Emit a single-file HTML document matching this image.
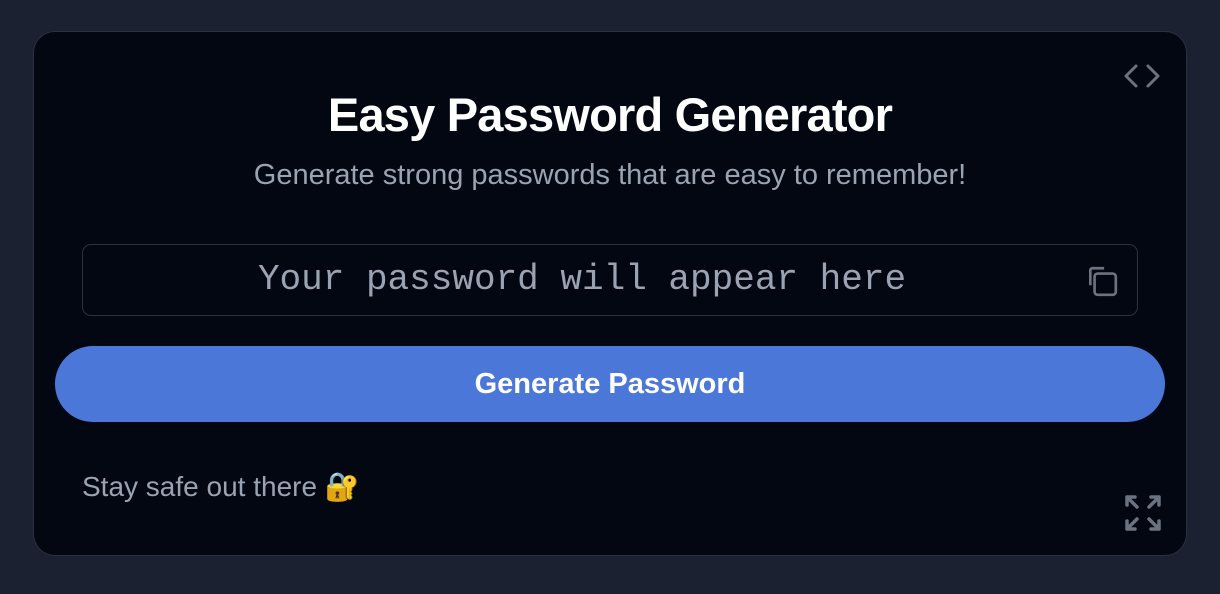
<!DOCTYPE html>
<html><head><meta charset="utf-8"><style>
*{margin:0;padding:0;box-sizing:border-box}
body{width:1220px;height:594px;background:#1b2130;font-family:"Liberation Sans",sans-serif;position:relative;overflow:hidden}
.card{position:absolute;left:33px;top:31px;width:1154px;height:525px;background:#030712;border:1px solid #2a3140;border-radius:22px}
h1{position:absolute;top:55px;left:0;right:0;text-align:center;color:#fff;font-size:47px;font-weight:bold;letter-spacing:-0.8px}
.sub{position:absolute;top:127px;left:0;right:0;text-align:center;color:#9aa3b2;font-size:29px}
.inp{position:absolute;left:48px;top:212px;width:1056px;height:72px;border:1.5px solid #2b3240;border-radius:9px;color:#9aa3b2;font-family:"Liberation Mono",monospace;font-size:36px;text-align:center;line-height:70px;padding-right:56px}
.btn{position:absolute;left:21px;top:314px;width:1110px;height:76px;background:#4a77d8;border-radius:38px;color:#fff;font-weight:bold;font-size:29px;text-align:center;line-height:76px}
.foot{position:absolute;left:48px;top:438px;color:#9aa3b2;font-size:28px}
svg{position:absolute}
</style></head><body>
<div class="card">
<svg style="left:1088px;top:30px" width="40" height="30" viewBox="0 0 40 30" fill="none" stroke="#6b7280" stroke-width="3" stroke-linecap="round" stroke-linejoin="round"><path d="M14 4 L4 14 L14 24"/><path d="M26 4 L36 14 L26 24"/></svg>
<h1>Easy Password Generator</h1>
<div class="sub">Generate strong passwords that are easy to remember!</div>
<div class="inp">Your password will appear here</div>
<svg style="left:1051px;top:232px" width="34" height="34" viewBox="0 0 32 32" fill="none" stroke="#6b7280" stroke-width="2.5" stroke-linejoin="round"><rect x="9" y="9" width="20" height="20" rx="3"/><path d="M5 20 V6 A2 2 0 0 1 7 4 H18"/></svg>
<div class="btn">Generate Password</div>
<div class="foot">Stay safe out there 🔐</div>
<svg style="left:1089px;top:461px" width="40" height="40" viewBox="0 0 40 40" fill="none" stroke="#6b7280" stroke-width="3.5" stroke-linecap="round" stroke-linejoin="round"><path d="M4 12V4H12M4 4L14 14"/><path d="M36 12V4H28M36 4L26 14"/><path d="M4 28V36H12M4 36L14 26"/><path d="M36 28V36H28M36 36L26 26"/></svg>
</div>
</body></html>
